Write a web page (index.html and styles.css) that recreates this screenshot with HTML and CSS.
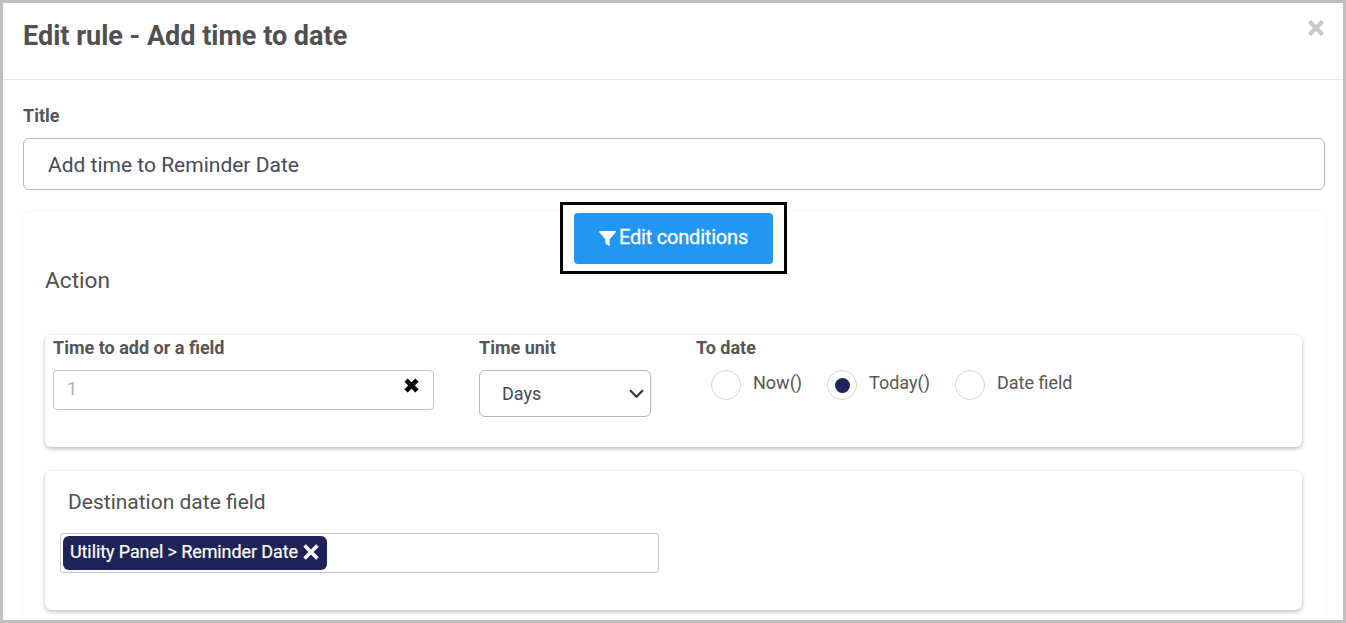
FILE: index.html
```html
<!DOCTYPE html>
<html lang="en">
<head>
<meta charset="utf-8">
<title>Edit rule</title>
<link rel="stylesheet" href="styles.css">
</head>
<body>
<div class="frame">
  <header class="head">
    <h1 class="head-title">Edit rule - Add time to date</h1>
    <svg class="close" viewBox="0 0 14 14" aria-hidden="true"><path d="M2 2 12 12M12 2 2 12"/></svg>
  </header>
  <main class="body">
    <label class="title-label">Title</label>
    <div class="title-input">Add time to Reminder Date</div>
    <section class="card">
      <div class="callout">
        <button class="btn" type="button">
          <svg class="funnel" viewBox="0 0 16 16" aria-hidden="true"><path d="M0.6 1h14.8c.5 0 .8.6.4 1L10 8.6V14.400c0 .5-.5.8-.9.5L6.300 13c-.2-.1-.3-.3-.3-.5V8.600L.2 2C-.2 1.600.1 1 .6 1z"/></svg>
          <span>Edit conditions</span>
        </button>
      </div>
      <h2 class="action">Action</h2>
      <div class="panel panel-time">
        <div class="col col-time">
          <div class="label">Time to add or a field</div>
          <div class="time-input">
            <span class="placeholder">1</span>
            <svg class="clear" viewBox="0 0 14 14" aria-hidden="true"><path d="M2.500 2.500 11.500 11.500M11.500 2.500 2.500 11.500"/></svg>
          </div>
        </div>
        <div class="col col-unit">
          <div class="label">Time unit</div>
          <div class="select">
            <span>Days</span>
            <svg class="chev" viewBox="0 0 14 8" aria-hidden="true"><path d="M1 1 7 7 13 1"/></svg>
          </div>
        </div>
        <div class="col">
          <div class="label">To date</div>
          <div class="radios">
            <div class="radio-item"><span class="radio"></span><span class="radio-text">Now()</span></div>
            <div class="radio-item"><span class="radio on"></span><span class="radio-text">Today()</span></div>
            <div class="radio-item"><span class="radio"></span><span class="radio-text">Date field</span></div>
          </div>
        </div>
      </div>
      <div class="panel panel-dest">
        <div class="dest-title">Destination date field</div>
        <div class="tag-input">
          <span class="tag">Utility Panel &gt; Reminder Date
            <svg class="tag-x" viewBox="0 0 14 14" aria-hidden="true"><path d="M2 2 12 12M12 2 2 12"/></svg>
          </span>
        </div>
      </div>
    </section>
  </main>
</div>
</body>
</html>
```
FILE: styles.css
```css
* { box-sizing: border-box; }
html, body { margin: 0; padding: 0; background: #fff; overflow: hidden; }
body { font-family: Roboto, "Liberation Sans", sans-serif; color: #505050; }
.frame {
  width: 1346px;
  height: 623px;
  border: 3px solid #bfbfbf;
  overflow: hidden;
  background: #fff;
}
.head {
  height: 77px;
  border-bottom: 1px solid #e6e6e6;
  display: flex;
  justify-content: space-between;
  padding: 0 19px 0 20px;
}
.head-title {
  margin: 0;
  font-size: 27px;
  line-height: 32px;
  font-weight: 700;
  padding-top: 17px;
  color: #505050;
}
.close {
  width: 18px;
  height: 18px;
  margin: 16px -1px 0 0;
  fill: none;
  stroke: #c8c8c8;
  stroke-width: 3.200;
}
.body { padding: 25px 18px 0 20px; }
.title-label {
  display: block;
  font-size: 18px;
  line-height: 22px;
  font-weight: 700;
  color: #555;
}
.title-input {
  margin-top: 11px;
  height: 52px;
  border: 1px solid #b5b5b5;
  border-radius: 6px;
  padding: 0 24px;
  font-size: 21px;
  line-height: 52px;
  color: #454a5c;
}
.card {
  display: flow-root;
  margin-top: 22px;
  background: #fff;
  border-radius: 6px;
  box-shadow: 0 0 5px rgba(0,0,0,.05);
  padding: 0 23px 40px 22px;
  height: 500px;
}
.callout {
  width: 227px;
  height: 72px;
  margin: -10px auto -7px;
  border: 3px solid #000;
  background: #fff;
  padding: 8px 11px;
  position: relative;
}
.btn {
  display: flex;
  align-items: center;
  justify-content: center;
  gap: 3px;
  width: 199px;
  height: 51px;
  border: 0;
  border-radius: 4px;
  background: #2196f3;
  color: #fff;
  font-family: inherit;
  font-size: 20px;
  font-weight: 400;
  letter-spacing: -.2px;
  padding: 0 0 3px;
  -webkit-text-stroke: .3px #fff;
}
.funnel { width: 17px; height: 17px; fill: #fff; margin-top: 2px; }
.action {
  margin: 0;
  font-size: 22.700px;
  line-height: 28px;
  font-weight: 400;
  color: #505050;
}
.panel {
  background: #fff;
  border-radius: 6px;
  box-shadow: 0 2px 4px rgba(0,0,0,.24), 0 0 3px rgba(0,0,0,.06);
}
.panel-time {
  display: flex;
  margin-top: 40px;
  height: 112px;
  padding: 2px 8px 0;
}
.label {
  font-size: 18px;
  line-height: 22px;
  font-weight: 700;
  color: #555;
}
.col-time { width: 426px; }
.col-unit { width: 217px; }
.time-input {
  width: 381px;
  height: 40px;
  margin-top: 11px;
  border: 1px solid #c4c4c4;
  border-radius: 4px;
  display: flex;
  justify-content: space-between;
  padding: 0 13px 0 13px;
}
.placeholder {
  font-size: 18px;
  line-height: 35px;
  color: #b0b0b0;
}
.clear {
  width: 17px;
  height: 17px;
  margin-top: 6px;
  fill: none;
  stroke: #000;
  stroke-width: 3.800;
}
.select {
  width: 172px;
  height: 47px;
  margin-top: 11px;
  border: 1px solid #b5b5b5;
  border-radius: 6px;
  display: flex;
  align-items: center;
  justify-content: space-between;
  padding: 0 6px 0 22px;
  font-size: 18px;
  color: #454a5c;
}
.chev {
  width: 15px;
  height: 9px;
  fill: none;
  stroke: #2d3142;
  stroke-width: 2;
}
.radios {
  display: flex;
  gap: 25px;
  margin: 11px 0 0 15px;
}
.radio-item {
  display: flex;
  gap: 12px;
}
.radio {
  width: 30px;
  height: 30px;
  border: 1px solid #d4d4d4;
  border-radius: 50%;
  display: flex;
  align-items: center;
  justify-content: center;
}
.radio.on::after {
  content: "";
  width: 15px;
  height: 15px;
  border-radius: 50%;
  background: #1e2459;
}
.radio-text {
  font-size: 18px;
  line-height: 25px;
  color: #555;
}
.panel-dest {
  margin-top: 24px;
  height: 139px;
  padding: 17px 15px 0;
}
.dest-title {
  font-size: 21px;
  line-height: 28px;
  padding-left: 8px;
  color: #505050;
}
.tag-input {
  width: 599px;
  height: 40px;
  margin-top: 17px;
  border: 1px solid #c8c8c8;
  border-radius: 3px;
  padding: 2px;
}
.tag {
  display: inline-flex;
  align-items: center;
  gap: 4px;
  height: 34px;
  padding: 0 7px 3px;
  border-radius: 6px;
  background: #1e2459;
  color: #fff;
  font-size: 18px;
  letter-spacing: -.1px;
  -webkit-text-stroke: .2px #fff;
}
.tag-x {
  width: 18px;
  height: 18px;
  fill: none;
  stroke: #fff;
  stroke-width: 2.800;
}
```
